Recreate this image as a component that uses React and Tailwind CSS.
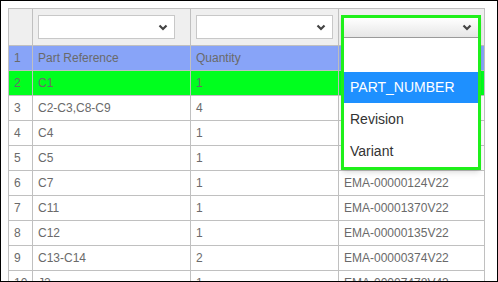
import React from "react";

// last column of rows 1-5 sits under the open dropdown
const rows = [
  ["C1", "1", ""],
  ["C2-C3,C8-C9", "4", ""],
  ["C4", "1", ""],
  ["C5", "1", ""],
  ["C7", "1", "EMA-00000124V22"],
  ["C11", "1", "EMA-00001370V22"],
  ["C12", "1", "EMA-00000135V22"],
  ["C13-C14", "2", "EMA-00000374V22"],
  ["J2", "1", "EMA-00007478V43"],
];

function Chevron() {
  return (
    <svg width="10" height="7" viewBox="0 0 10 7" className="text-[#444]">
      <path d="M1.5 1.5 L5 5 L8.5 1.5" fill="none" stroke="currentColor" strokeWidth="2.2" />
    </svg>
  );
}

function FakeSelect() {
  return (
    <div className="w-[137px] h-[24px] border border-[#c8c8c8] bg-white flex items-center justify-end pr-[6px]">
      <Chevron />
    </div>
  );
}

function Row({ n, cells, bg }) {
  return (
    <div className={`flex h-[25px] ${bg}`}>
      <div className="w-[24px] shrink-0 border-r border-b border-[#c0c0c0] flex items-center pl-[5px]">{n}</div>
      <div className="w-[158px] shrink-0 border-r border-b border-[#c0c0c0] flex items-center pl-[5px]">{cells[0]}</div>
      <div className="w-[148px] shrink-0 border-r border-b border-[#c0c0c0] flex items-center pl-[5px]">{cells[1]}</div>
      <div className="w-[146px] shrink-0 border-r border-b border-[#c0c0c0] flex items-center pl-[5px]">{cells[2]}</div>
    </div>
  );
}

export default function App() {
  return (
    <div className="relative w-[498px] h-[282px] border border-black bg-white overflow-hidden p-[7px] font-['Liberation_Sans',Arial,sans-serif] text-[12px] text-[#6a6a6a]">
      <div className="w-[477px] border-l border-t border-[#c0c0c0]">
        <div className="flex h-[37px] bg-[#efefef]">
          <div className="w-[24px] shrink-0 border-r border-b border-[#c0c0c0]" />
          <div className="w-[158px] shrink-0 border-r border-b border-[#c0c0c0] pl-[5px] pt-[6px]">
            <FakeSelect />
          </div>
          <div className="w-[148px] shrink-0 border-r border-b border-[#c0c0c0] pl-[5px] pt-[6px]">
            <FakeSelect />
          </div>
          <div className="w-[146px] shrink-0 border-r border-b border-[#c0c0c0]" />
        </div>
        <Row n="1" cells={["Part Reference", "Quantity", ""]} bg="bg-[#88a4f8]" />
        {rows.map((r, i) => (
          <Row key={i} n={String(i + 2)} cells={r} bg={i === 0 ? "bg-[#00ff1e]" : "bg-white"} />
        ))}
      </div>

      {/* open dropdown over the last column */}
      <div className="absolute left-[340px] top-[14px] w-[140px] border-[3px] border-[#1ff01a] bg-white shadow-md font-['Liberation_Sans',Arial,sans-serif] text-[14px] text-[#333]">
        <div className="h-[20px] bg-gradient-to-b from-white to-[#e6e6e6] border-b border-[#9a9a9a] flex items-center justify-end pr-[6px]">
          <Chevron />
        </div>
        <div className="h-[34px]" />
        <div className="h-[31px] bg-[#1e90ff] text-white flex items-center pl-[6px]">PART_NUMBER</div>
        <div className="h-[32px] flex items-center pl-[6px]">Revision</div>
        <div className="h-[32px] flex items-center pl-[6px]">Variant</div>
      </div>
    </div>
  );
}
